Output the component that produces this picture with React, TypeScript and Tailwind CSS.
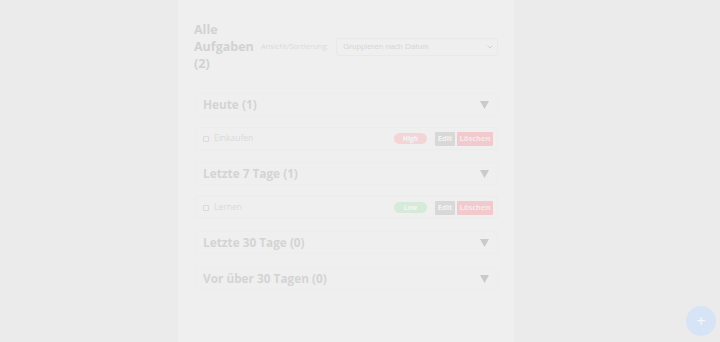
import React from "react";

function Group({ title, children }: { title: string; children?: React.ReactNode }) {
  return (
    <div className={"flex flex-col gap-[11px] " + (children ? "" : "pb-[1px]")}>
      <div className="flex h-[23px] items-center justify-between rounded-[3px] border border-[#ededed] bg-[#efefef] pl-[7px] pr-[7px]">
        <span className="text-[11.8px] font-bold text-[#d4d4d4]">{title}</span>
        <svg width="9" height="8" viewBox="0 0 9 8" className="mr-[1px]">
          <path d="M0 0 H9 L4.5 8 Z" fill="#cacaca" />
        </svg>
      </div>
      {children}
    </div>
  );
}

function Item({ name, prio, high }: { name: string; prio: string; high: boolean }) {
  return (
    <div className="flex h-[23px] items-center rounded-[3px] border border-[#ececec] bg-[#efefef] pl-[7px] pr-[4px]">
      <span className="h-[6px] w-[6px] rounded-[1px] border border-[#dadada]" />
      <span className="ml-[5px] text-[8.5px] text-[#dadada]">{name}</span>
      <span
        className={
          "ml-auto flex h-[11px] w-[33px] items-center justify-center rounded-full text-[6.5px] font-bold text-[#f5f5f5] " +
          (high ? "bg-[#f3d5d8]" : "bg-[#d5ead9]")
        }
      >
        {prio}
      </span>
      <span className="ml-[8px] flex h-[14px] w-[20px] items-center justify-center rounded-[1px] bg-[#d8d8d8] text-[7.5px] font-bold text-[#f3f3f3]">
        Edit
      </span>
      <span className="ml-[2px] flex h-[14px] w-[36px] items-center justify-center rounded-[1px] bg-[#f2c9cd] text-[7.5px] font-bold text-[#f6eaeb]">
        Löschen
      </span>
    </div>
  );
}

export default function App() {
  return (
    <div
      className="relative flex h-[342px] w-[720px] justify-center overflow-hidden bg-[#ebebeb]"
      style={{ fontFamily: '"Open Sans", sans-serif' }}
    >
      <div className="ml-[-28px] flex w-[336px] flex-col bg-[#efefef] px-[16px] pt-[21px]">
        <div className="flex items-center">
          <h2 className="w-[60px] text-[12.5px] font-bold leading-[17px] text-[#d2d2d2]">Alle Aufgaben (2)</h2>
          <span className="ml-[7px] text-[7.5px] text-[#dadada]">Ansicht/Sortierung:</span>
          <div
            className="ml-[8px] flex h-[18px] flex-1 items-center justify-between rounded-[3px] border border-[#e9e9e9] pl-[6px] pr-[4px] text-[8px] text-[#d6d6d6]"
            style={{ fontFamily: '"Liberation Sans", Arial, sans-serif' }}
          >
            <span>Gruppieren nach Datum</span>
            <svg width="6" height="4" viewBox="0 0 6 4">
              <path d="M0.5 0.5 L3 3 L5.5 0.5" fill="none" stroke="#d0d0d0" strokeWidth="1" />
            </svg>
          </div>
        </div>
        <div className="mt-[21px] flex flex-col gap-[12px] pl-[1px]">
          <Group title="Heute (1)">
            <Item name="Einkaufen" prio="High" high={true} />
          </Group>
          <Group title="Letzte 7 Tage (1)">
            <Item name="Lernen" prio="Low" high={false} />
          </Group>
          <Group title="Letzte 30 Tage (0)" />
          <Group title="Vor über 30 Tagen (0)" />
        </div>
      </div>
      <div className="absolute bottom-[6px] right-[4px] flex h-[30px] w-[30px] items-center justify-center rounded-full bg-[#d6e4f6] text-[16px] leading-none text-[#f4f7fb]">
        +
      </div>
    </div>
  );
}
